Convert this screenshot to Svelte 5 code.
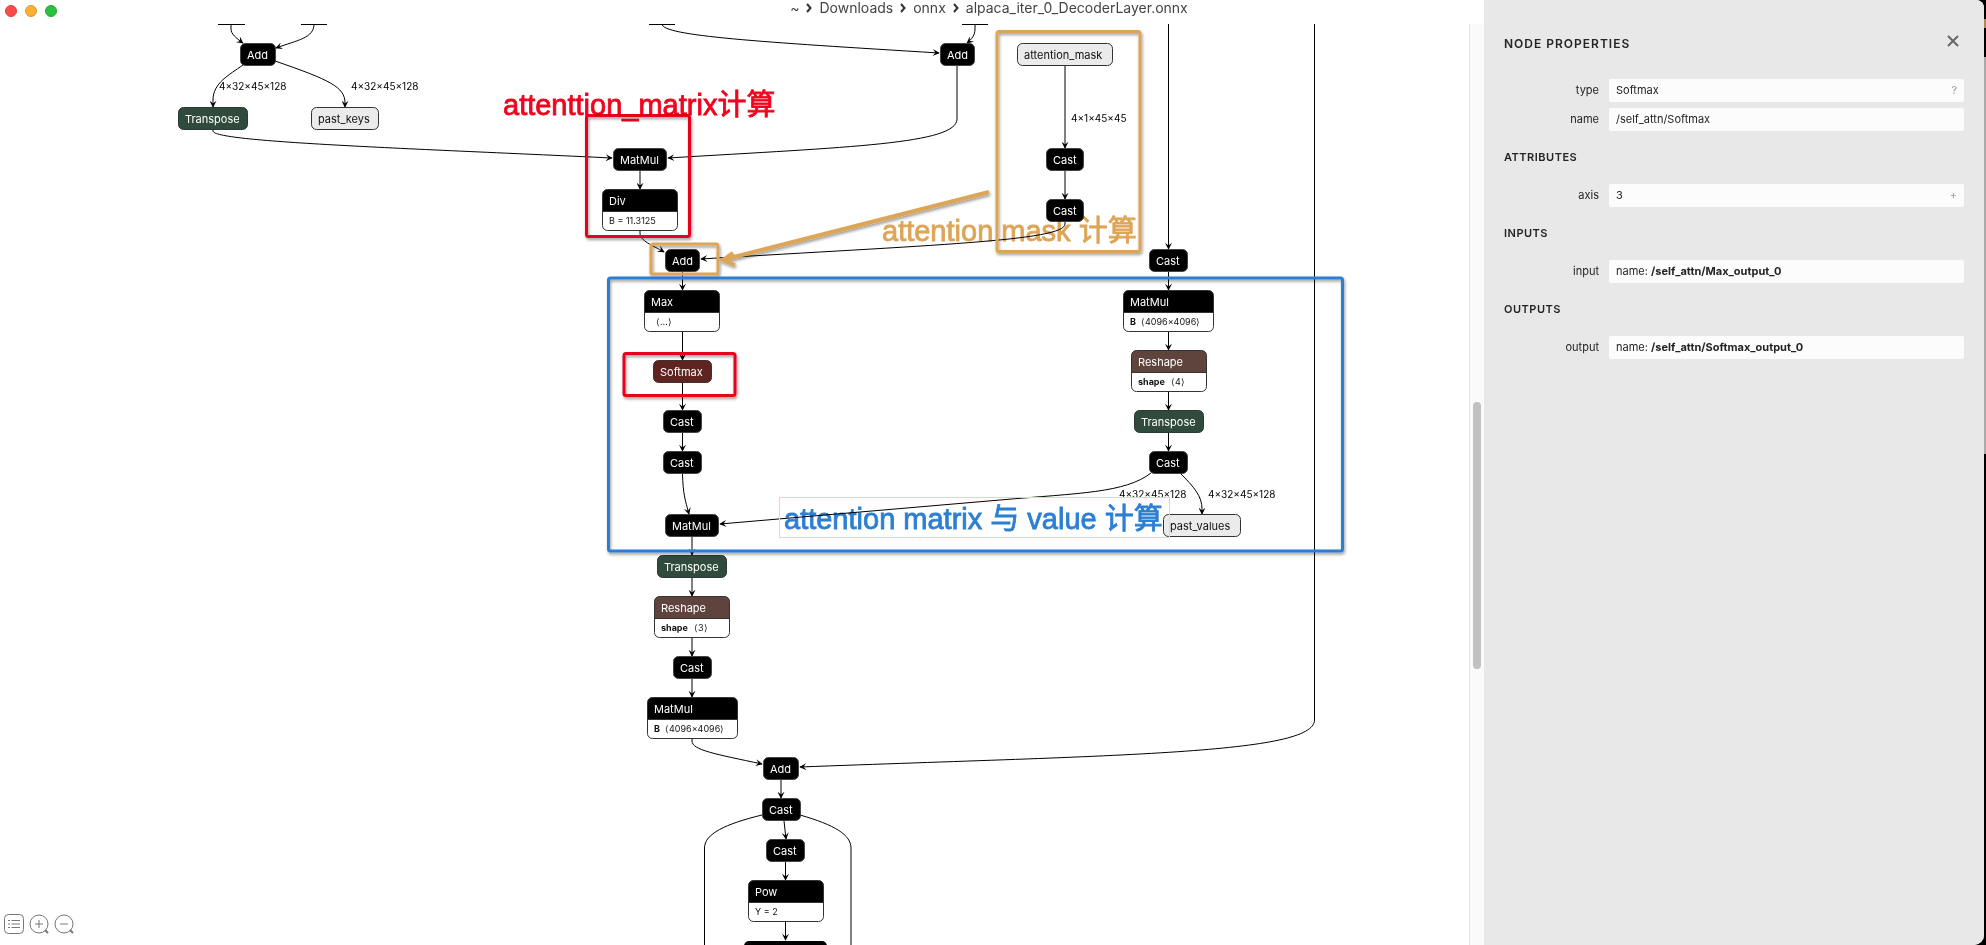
<script>
  const crumbs = ['~', 'Downloads', 'onnx', 'alpaca_iter_0_DecoderLayer.onnx'];

  // Simple operators and graph values: one title bar each.
  const simple = [
    { t: 'Add', x: 240, y: 44, w: 36 },
    { t: 'Transpose', x: 178, y: 108, w: 70, k: 'transform' },
    { t: 'past_keys', x: 311, y: 108, w: 68, k: 'value' },
    { t: 'Add', x: 940, y: 44, w: 35 },
    { t: 'MatMul', x: 613, y: 149, w: 54 },
    { t: 'Add', x: 665, y: 250, w: 35 },
    { t: 'attention_mask', x: 1017, y: 44, w: 96, k: 'value' },
    { t: 'Cast', x: 1046, y: 149, w: 38 },
    { t: 'Cast', x: 1046, y: 200, w: 38 },
    { t: 'Cast', x: 1149, y: 250, w: 39 },
    { t: 'Softmax', x: 653, y: 361, w: 59, k: 'activation' },
    { t: 'Cast', x: 663, y: 411, w: 39 },
    { t: 'Cast', x: 663, y: 452, w: 39 },
    { t: 'MatMul', x: 665, y: 515, w: 54 },
    { t: 'Transpose', x: 657, y: 556, w: 70, k: 'transform' },
    { t: 'Cast', x: 673, y: 657, w: 39 },
    { t: 'Add', x: 763, y: 758, w: 36 },
    { t: 'Cast', x: 762, y: 799, w: 39 },
    { t: 'Cast', x: 766, y: 840, w: 39 },
    { t: 'Transpose', x: 1134, y: 411, w: 70, k: 'transform' },
    { t: 'Cast', x: 1149, y: 452, w: 39 },
    { t: 'past_values', x: 1163, y: 515, w: 78, k: 'value' }
  ];

  // Operators with an initializer or constant row below the title.
  const detailed = [
    { t: 'Div', x: 602, y: 190, w: 76, v: 'B = 11.3125' },
    { t: 'Max', x: 644, y: 291, w: 76, v: '⟨…⟩', dx: 5 },
    { t: 'MatMul', x: 1123, y: 291, w: 91, b: 'B', v: '⟨4096×4096⟩', dx: 11 },
    { t: 'Reshape', x: 1131, y: 351, w: 76, b: 'shape', v: '⟨4⟩', dx: 33, k: 'shape' },
    { t: 'Reshape', x: 654, y: 597, w: 76, b: 'shape', v: '⟨3⟩', dx: 33, k: 'shape' },
    { t: 'MatMul', x: 647, y: 698, w: 91, b: 'B', v: '⟨4096×4096⟩', dx: 11 },
    { t: 'Pow', x: 748, y: 881, w: 76, v: 'Y = 2' }
  ];

  const edges = [
    'M231 24V29C231 34 236 38 243 43',
    'M314 24C314 38 298 40 276 48',
    'M243 65C229 75 213 83 213 100V107',
    'M275 61C330 80 345 87 345 103V107',
    'M213 129V131C213 142 400 148 612 158',
    'M662 24C662 36 760 42 939 53',
    'M975 24V29C975 35 972 39 967 43',
    'M957 65V119C957 144 850 147 668 158',
    'M640 171V189',
    'M640 230V233C640 241 652 245 664 252',
    'M1065 66V148',
    'M1065 171V199',
    'M1065 222V224C1065 241 930 245 701 259',
    'M1168.5 24V249',
    'M682.5 272V290',
    'M682.5 331V360',
    'M682.5 383V410',
    'M682.5 433V451',
    'M682.5 474C683 493 685 500 689 514',
    'M692 537V555',
    'M692 578V596',
    'M692 638V656',
    'M692 679V697',
    'M692 739V741C692 750 715 754 762 764',
    'M1314.5 24V720C1314.5 754 1120 755 800 767',
    'M781 780V798',
    'M784 821L786 839',
    'M785.5 862V880',
    'M785.5 922V940',
    'M1168.5 272V290',
    'M1168.5 332V350',
    'M1168.5 392V410',
    'M1168.5 433V451',
    'M1180 473C1194 487 1202 496 1202 509V514',
    'M1151 473C1125 493 1080 493 1000 500L720 524'
  ];

  const openEdges = [
    'M762 815C725 824 704.5 834 704.5 848V1100',
    'M800 815C835 825 851 835 851 848V1100'
  ];

  const shapes = [
    { t: '4×32×45×128', x: 219, y: 90 },
    { t: '4×32×45×128', x: 351, y: 90 },
    { t: '4×1×45×45', x: 1071, y: 122 },
    { t: '4×32×45×128', x: 1119, y: 498 },
    { t: '4×32×45×128', x: 1208, y: 498 }
  ];

  const groups = [
    { title: null, rows: [
      { label: 'type', value: 'Softmax', action: '?', hint: 'Show documentation' },
      { label: 'name', value: '/self_attn/Softmax' }
    ] },
    { title: 'Attributes', rows: [{ label: 'axis', value: '3', action: '+', hint: 'Expand' }] },
    { title: 'Inputs', rows: [{ label: 'input', id: '/self_attn/Max_output_0' }] },
    { title: 'Outputs', rows: [{ label: 'output', id: '/self_attn/Softmax_output_0' }] }
  ];
</script>

<div class="desktop">
  <div class="window">
    <header class="titlebar">
      <div class="lights">
        <button class="light red" aria-label="Close window"></button>
        <button class="light amber" aria-label="Minimize window"></button>
        <button class="light green" aria-label="Zoom window"></button>
      </div>
      <nav class="path" aria-label="File path">
        {#each crumbs as c, i}
          {#if i > 0}
            <svg class="chevron" viewBox="0 0 6 10" aria-hidden="true"><path d="M1 1L4.5 5L1 9" /></svg>
          {/if}
          <span>{c}</span>
        {/each}
      </nav>
    </header>

    <main class="canvas">
      <svg class="graph" role="img" aria-label="Model graph">
        <defs>
          <marker id="vee" viewBox="0 0 10 10" refX="9" refY="5" markerUnits="userSpaceOnUse" markerWidth="8" markerHeight="7" orient="auto">
            <path d="M0 0L10 5L0 10L4 5z" />
          </marker>
          <filter id="drop" x="-10%" y="-10%" width="120%" height="125%">
            <feDropShadow dx="1" dy="2" stdDeviation="1.5" flood-color="#000" flood-opacity="0.4" />
          </filter>
        </defs>
        <g transform="translate(0 -24)">
          <g class="edges">
            <path d="M218 24.5H245M301 24.5H327M649 24.5H675M962 24.5H988" />
            {#each edges as d}<path {d} marker-end="url(#vee)" />{/each}
            {#each openEdges as d}<path {d} />{/each}
          </g>

          <g class="shapes">
            {#each shapes as s}<text x={s.x} y={s.y}>{s.t}</text>{/each}
          </g>

          {#each simple as n}
            <g class="node {n.k ?? 'op'}">
              <rect x={n.x + 0.5} y={n.y - 0.5} width={n.w - 1} height="22" rx="5" />
              <text x={n.x + 7} y={n.y + 15}>{n.t}</text>
            </g>
          {/each}

          {#each detailed as n}
            <g class="node {n.k ?? 'op'}">
              <path class="head" d="M{n.x + 0.5} {n.y + 21}V{n.y + 4.5}a5 5 0 0 1 5 -5H{n.x + n.w - 5.5}a5 5 0 0 1 5 5V{n.y + 21}z" />
              <path class="frame" d="M{n.x + 0.5} {n.y + 21.5}H{n.x + n.w - 0.5}" />
              <rect class="frame" x={n.x + 0.5} y={n.y - 0.5} width={n.w - 1} height="41" rx="5" />
              <text x={n.x + 7} y={n.y + 15}>{n.t}</text>
              {#if n.b}<text class="row bold" x={n.x + 7} y={n.y + 34}>{n.b}</text>{/if}
              <text class="row" x={n.x + 7 + (n.dx ?? 0)} y={n.y + 34}>{n.v}</text>
            </g>
          {/each}
          <rect x="744" y="941" width="83" height="22" rx="5" />

          <g class="marks" filter="url(#drop)">
            <rect class="red" x="586.5" y="115.5" width="103" height="121" rx="2" />
            <rect class="red" x="624" y="353.5" width="111" height="42" rx="2" />
            <rect class="orange" x="997" y="31.5" width="143" height="220" rx="2" />
            <rect class="orange" x="651" y="244" width="67" height="30" rx="2" />
            <path class="orange arrow" d="M989 192L726 259M733 253L723 260L735 265" />
            <rect class="blue" x="608.5" y="278" width="734" height="273" rx="2" />
          </g>
          <rect class="textbox" x="779.5" y="497.5" width="390" height="40" />
          <g class="notes">
            <text class="red" x="503" y="115">attenttion_matrix计算</text>
            <text class="orange" x="882" y="241">attention mask 计算</text>
            <text class="blue" x="784" y="529">attention matrix 与 value 计算</text>
          </g>
        </g>
      </svg>

      <div class="tools">
        <button aria-label="Menu">
          <svg viewBox="0 0 20 20"><rect x="0.5" y="0.5" width="19" height="19" rx="4" /><path d="M4 6.5H6M7.500 6.500H16M4 10H6M7.500 10H16M4 13.500H6M7.500 13.500H16" /></svg>
        </button>
        <button aria-label="Zoom in">
          <svg viewBox="0 0 20 20"><circle cx="10" cy="10" r="9" /><path d="M6 10H14M10 6V14" /><path class="grip" d="M16 16L19 19" /></svg>
        </button>
        <button aria-label="Zoom out">
          <svg viewBox="0 0 20 20"><circle cx="10" cy="10" r="9" /><path d="M6 10H14" /><path class="grip" d="M16 16L19 19" /></svg>
        </button>
      </div>
    </main>

    <div class="track"><div class="thumb"></div></div>

    <aside class="sidebar">
      <div class="top">
        <h1>Node Properties</h1>
        <button class="close" aria-label="Close sidebar">
          <svg viewBox="0 0 12 12"><path d="M1 1L11 11M11 1L1 11" /></svg>
        </button>
      </div>
      {#each groups as g}
        <section>
          {#if g.title}<h2>{g.title}</h2>{/if}
          <dl>
            {#each g.rows as r}
              <div class="item">
                <dt>{r.label}</dt>
                <dd>
                  <span>{#if r.id}name: <b>{r.id}</b>{:else}{r.value}{/if}</span>
                  {#if r.action}<button aria-label={r.hint}>{r.action}</button>{/if}
                </dd>
              </div>
            {/each}
          </dl>
        </section>
      {/each}
    </aside>
  </div>
  <div class="behind"></div>
</div>

<style>
  :global(body) { background: #000; }
  .desktop {
    display: grid;
    grid-template-columns: 1fr 2px;
    height: 100vh;
    background: #000;
    font-family: Inter, "Noto Sans CJK SC", sans-serif;
  }
  .behind {
    background: linear-gradient(#000 0 2%, #a98a5a 2% 3%, #000 3% 6%, #aaa 6% 48%, #000 48%);
  }
  .window {
    display: grid;
    grid-template-columns: minmax(0, 1fr) 15px 500px;
    grid-template-rows: 24px minmax(0, 1fr);
    background: #fff;
    border-radius: 0 8px 10px 0;
    overflow: hidden;
  }
  button { padding: 0; border: 0; background: none; font: inherit; }

  .titlebar {
    grid-area: 1 / 1 / 2 / 4;
    display: grid;
    align-items: start;
  }
  .lights { grid-area: 1 / 1; display: flex; gap: 8px; padding: 5px; width: 60px; }
  .light { width: 12px; height: 12px; border-radius: 50%; box-sizing: border-box; }
  .light.red { background: #fc4b48; border: 1px solid #e0403e; }
  .light.amber { background: #fdb02f; border: 1px solid #dd9a35; }
  .light.green { background: #2bc03e; border: 1px solid #25a838; }
  .path {
    grid-area: 1 / 1;
    justify-self: center;
    display: flex;
    align-items: center;
    gap: 7px;
    padding-right: 6px;
    font-size: 14px;
    line-height: 16px;
    color: #444;
  }
  .chevron { width: 6px; height: 10px; fill: none; stroke: #333; stroke-width: 2; }

  .canvas { grid-area: 2 / 1; position: relative; background: #fff; }
  .graph { display: block; width: 100%; height: 100%; }
  .edges path { fill: none; stroke: #000; stroke-width: 1; }
  .graph text { font-size: 11px; }
  .graph .shapes text { font-size: 10px; }
  .node rect { stroke: #444; }
  .node text { fill: #fff; }
  .node .head { stroke: none; }
  .node .frame { fill: none; stroke: #333; }
  .transform rect { fill: #304b3c; stroke: #2c3a33; }
  .activation rect { fill: #602420; stroke: #40302f; }
  .value rect { fill: #ebebeb; stroke: #333; }
  .node.value text { fill: #111; }
  .shape .head { fill: #5f443d; }
  .graph .node .row { font-size: 9px; fill: #111; }
  .bold { font-weight: 700; }

  .marks > * { fill: none; stroke-width: 3; }
  .marks .red { stroke: #e8051f; }
  .marks .orange { stroke: #dda556; }
  .marks .blue { stroke: #2b7fd3; }
  .marks .arrow { stroke-width: 4; }
  .textbox { fill: none; stroke: #ffc8cf; }
  .notes { mix-blend-mode: multiply; }
  .graph .notes text {
    font-family: "Liberation Sans", "Noto Sans CJK SC", sans-serif;
    font-size: 29px;
    stroke-width: 0.8;
  }
  .notes .red { fill: #f0041f; stroke: #f0041f; }
  .notes .orange { fill: #dda556; stroke: #dda556; }
  .notes .blue { fill: #2b7fd3; stroke: #2b7fd3; }

  .tools { position: absolute; left: 4px; bottom: 11px; display: flex; gap: 5px; }
  .tools button { width: 20px; height: 20px; }
  .tools svg { display: block; fill: none; stroke: #777; }
  .tools .grip { stroke-width: 2; }

  .track {
    grid-area: 2 / 2;
    box-sizing: border-box;
    padding: 0 3px;
    border-left: 1px solid #e4e4e4;
    background: #fafafa;
    display: grid;
    grid-template-rows: 41fr 29fr 30fr;
  }
  .thumb { grid-row: 2; border-radius: 4px; background: #c1c1c1; }

  .sidebar {
    grid-area: 1 / 3 / 3 / 4;
    box-sizing: border-box;
    padding: 35px 20px 20px;
    background: #e8e8e8;
    color: #242424;
    font-size: 11px;
  }
  .top { display: flex; justify-content: space-between; height: 44px; }
  h1, h2 { margin: 0; font-weight: 600; text-transform: uppercase; }
  h1 { font-size: 12px; line-height: 17px; letter-spacing: 1px; }
  h2 { box-sizing: border-box; padding-top: 19px; height: 53px; font-size: 11px; line-height: 14px; letter-spacing: 0.5px; }
  .close { width: 12px; height: 12px; margin-right: 5px; }
  .close svg { display: block; stroke: #666; stroke-width: 2; }
  dl { margin: 0; display: grid; gap: 6px; }
  .item { display: grid; grid-template-columns: 95px 1fr; gap: 10px; line-height: 23px; }
  dt { text-align: right; }
  dd {
    margin: 0;
    padding: 0 7px;
    display: flex;
    justify-content: space-between;
    border-radius: 2px;
    background: #fcfcfc;
  }
  dd button { color: #999; line-height: 23px; }
</style>
